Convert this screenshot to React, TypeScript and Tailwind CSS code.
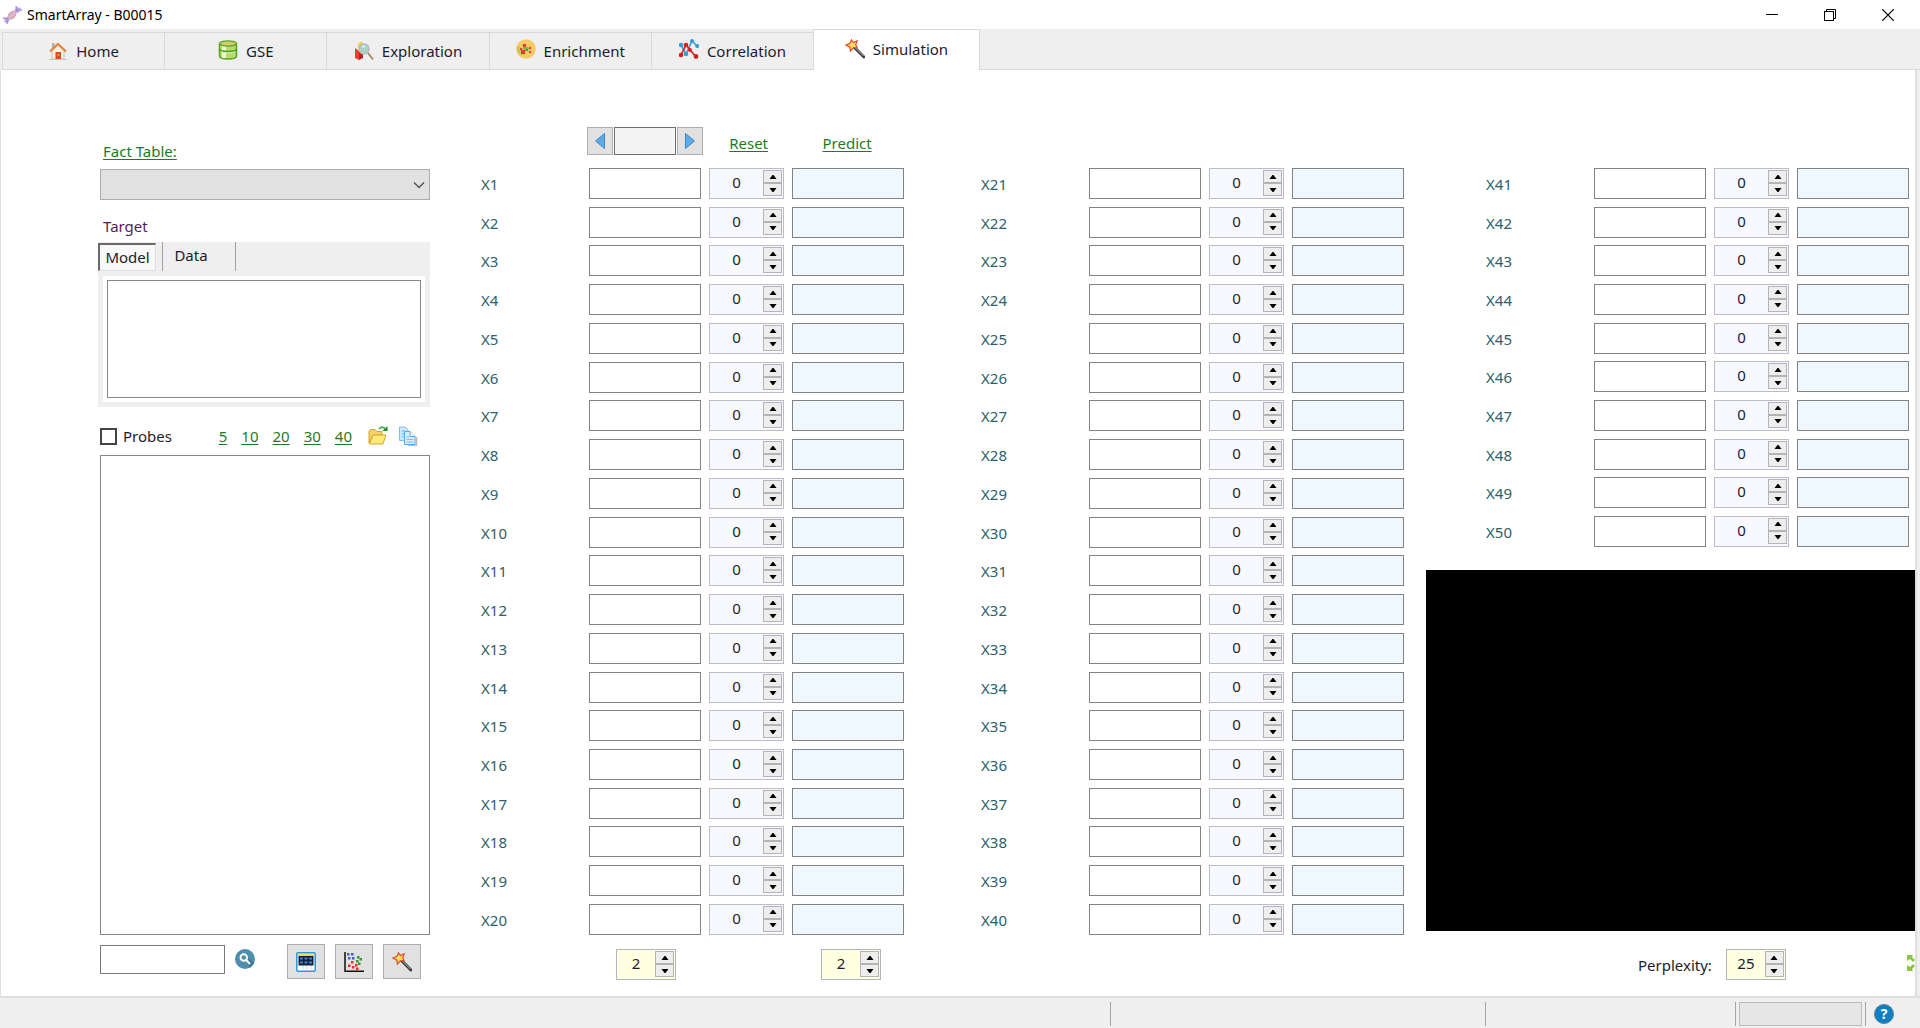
import { useState } from 'react';
import type { ReactNode } from 'react';

interface ITab {
  name: string;
  icon: ReactNode;
}

const DnaIcon = () => (
  <svg className="h-5 w-5" viewBox="0 0 20 20" fill="none">
    <path d="M2 17 L4 12 L8 13 L6 18 Z" fill="#bfa2dc" />
    <path d="M12 7 L14 2 L19 3 L16 8 Z" fill="#bfa2dc" />
    <ellipse cx="10" cy="10" rx="5" ry="3.500" transform="rotate(-42 10 10)" fill="#d3c0e6" />
    <path d="M7 10 L12 13 M9 8 L13 11" stroke="#f0b48e" strokeWidth="1.500" />
    <path d="M1 13 L6 14 L5 19 M14 1 L15 6 L20 5" stroke="#a58fdc" strokeWidth="1.300" />
    <path d="M6 13 C6 9 10 6 14 6 M7 14 C11 14 14 11 14 7" stroke="#d79ac4" strokeWidth="1.200" />
  </svg>
);

const HomeIcon = () => (
  <svg className="h-5 w-5" viewBox="0 0 20 20">
    <path d="M4 9 L10 4 L16 9 V18 H4 Z" fill="#f6efe0" stroke="#c9c2b2" />
    <path d="M4 2 H6.500 V8 H4 Z" fill="#b0b0b0" />
    <path d="M2 10.500 L10 3 L18 10.500" fill="none" stroke="#e0853c" strokeWidth="2.200" />
    <rect x="7.500" y="11" width="5.500" height="7" fill="#dd4a22" />
    <path d="M9.500 13 H11.500 V15 H9.500 Z" fill="#f08a55" />
    <path d="M1 18.500 H19" stroke="#c4c8c0" />
  </svg>
);

const DatabaseIcon = () => (
  <svg className="mb-0.5 h-5 w-5" viewBox="0 0 20 20">
    <path d="M1.500 4 V16 C1.500 20 18.500 20 18.500 16 V4 Z" fill="#b5dc6c" stroke="#5aa61f" strokeWidth="1.500" />
    <path d="M6 6 V18" stroke="#eef9cc" strokeWidth="4" />
    <ellipse cx="10" cy="3.500" rx="8.500" ry="2.600" fill="#d3c873" stroke="#5aa61f" strokeWidth="1.300" />
    <path d="M1.500 9.500 C2 12.500 18 12.500 18.500 9.500" fill="none" stroke="#4f9e1c" strokeWidth="2" />
    <path d="M3 11 C4 13.500 16 13.500 17 11" fill="none" stroke="#f2fbd8" />
  </svg>
);

const ExplorationIcon = () => (
  <svg className="h-5 w-5" viewBox="0 0 20 20">
    <path d="M1 7 L5 10 V19 L1 17 Z" fill="#ee3b30" />
    <path d="M5 10 L9 9 V17 L5 19 Z" fill="#b81f1f" />
    <path d="M4 3 L7 0.500 L10 3 V10 H4 Z" fill="#f8cf3d" />
    <circle cx="10" cy="8" r="5" fill="#a9d3c4" stroke="#b4bcc4" strokeWidth="1.600" />
    <path d="M8 6 L11 5" stroke="#effaf6" strokeWidth="1.500" />
    <path d="M14 12 L19 18.500" stroke="#a98a68" strokeWidth="2" />
  </svg>
);

const EnrichmentIcon = () => (
  <svg className="mb-1 h-5 w-5" viewBox="0 0 20 20">
    <circle cx="10" cy="10" r="9.800" fill="#fdc866" />
    <path d="M0.500 8 C5 7 10 9 9 16 C5 17 1 15 0.500 8" fill="#c5c860" />
    <path d="M7 8 L12 8 L13 11 L8 13 Z" fill="#6cc04a" />
    <rect x="7" y="5" width="3" height="3" fill="#f0372d" />
    <rect x="13" y="8" width="2" height="2" fill="#f0372d" />
    <rect x="4" y="9" width="2" height="2" fill="#f0372d" />
    <rect x="5" y="11" width="4" height="4" fill="#f0372d" />
    <rect x="13" y="12" width="2" height="2" fill="#f0372d" />
    <rect x="10" y="10" width="2" height="2" fill="#3c9e31" />
  </svg>
);

const CorrelationIcon = () => (
  <svg className="mb-1 h-5 w-5" viewBox="0 0 20 20">
    <g stroke="#3c9bd1" fill="#3c9bd1" strokeWidth="1.600">
      <path d="M2 6 L7 15 L13 2 L18 7" fill="none" />
      <circle cx="2" cy="6" r="1.500" />
      <circle cx="7" cy="15" r="1.500" />
      <circle cx="13" cy="2" r="1.200" />
      <circle cx="18.200" cy="7" r="1.200" />
    </g>
    <g stroke="#d4201f" fill="#d4201f" strokeWidth="1.600">
      <path d="M2 16 L7 6 L17 18" fill="none" />
      <circle cx="2" cy="16" r="1.500" />
      <circle cx="7" cy="6" r="1.500" />
      <circle cx="11" cy="11" r="1.200" />
      <circle cx="17" cy="17.500" r="1.600" />
    </g>
  </svg>
);

const WandIcon = () => (
  <svg className="h-5 w-5" viewBox="0 0 20 20">
    <path d="M9 8 L19 18" stroke="#3a3a3a" strokeWidth="3" strokeLinecap="round" />
    <path d="M9.500 8 L18.500 17" stroke="#b5b5b5" />
    <path
      d="M6.500 0.800 L8.300 3.500 L12.200 1.800 L10.700 5.800 L12.200 8.800 L8.500 8.800 L5.300 12 L4.800 8.200 L0.800 6 L4.800 4.500 Z"
      fill="#ffd84a"
      stroke="#d9482b"
      strokeWidth="1.100"
    />
    <path d="M6.500 4 L8 6 L6 7 Z" fill="#fff3b8" />
  </svg>
);

const FolderIcon = () => (
  <svg className="h-5 w-5" viewBox="0 0 20 20">
    <path d="M1 17 V5 L3 3.500 H7 L9 5.500 H14 V9 H5 Z" fill="#f4d468" stroke="#d3a52c" />
    <path d="M1.500 18 L5 9 H18 L15 18 Z" fill="#ffe97a" stroke="#d9a82a" strokeLinejoin="round" />
    <path d="M11 3 C13 0.500 16 1 17 3" fill="none" stroke="#5fae5a" strokeWidth="2" />
    <path d="M19.500 0 V5 H14.500 Z" fill="#1f8a2a" />
  </svg>
);

const CopyIcon = () => (
  <svg className="h-5 w-5" viewBox="0 0 20 20">
    <path d="M10 19.500 H18.500 V11" fill="none" stroke="#b9b9b9" strokeWidth="1.500" />
    <path d="M1.500 1 H7 L10 4 V14.500 H1.500 Z" fill="#cfe8fc" stroke="#7dbcf0" />
    <path d="M3.500 5 H7 M3.500 8 H7 M3.500 11 H7" stroke="#7db9ea" />
    <path d="M6.500 5.500 H12 L17 10.500 V18.500 H6.500 Z" fill="#d9edfd" stroke="#56a9ee" strokeLinejoin="round" />
    <path d="M12 5.500 V10.500 H17" fill="#fff" stroke="#56a9ee" />
    <path d="M8.500 11 H11 M8.500 13.500 H15 M8.500 16 H15" stroke="#7db9ea" />
  </svg>
);

const SearchIcon = () => (
  <svg className="h-5 w-5" viewBox="0 0 20 20">
    <circle cx="10" cy="10" r="10" fill="#4f8fad" />
    <path d="M11 12 L15 19 L19 14 L13 9 Z" fill="#3b7593" />
    <circle cx="8.800" cy="8.500" r="3.300" fill="none" stroke="#fff" strokeWidth="1.900" />
    <path d="M11.200 11 L14.500 14.500" stroke="#fff" strokeWidth="2.200" strokeLinecap="round" />
  </svg>
);

const TableIcon = () => (
  <svg className="h-5 w-5" viewBox="0 0 20 20">
    <rect x="0.800" y="0.800" width="18.400" height="18.400" rx="1" fill="#fff" stroke="#3096d3" strokeWidth="1.500" />
    <path d="M2 3 H18" stroke="#f0c43a" strokeWidth="1.500" />
    <rect x="2.500" y="4" width="15" height="9.500" fill="#10203c" />
    <path d="M4 6.500 H7 M8.500 6.500 H11.500 M13 6.500 H16 M4 10.500 H7 M8.500 10.500 H11.500 M13 10.500 H16" stroke="#4d80bd" strokeWidth="2" />
    <path d="M7 14 V17 M11 14 V17 M15 14 V17" stroke="#bcd4ea" />
  </svg>
);

const ScatterIcon = () => (
  <svg className="h-5 w-5" viewBox="0 0 20 20">
    <path d="M1 0 V19.200 H20" fill="none" stroke="#111" strokeWidth="1.500" />
    <path d="M3 1 h2.500 v2.500 h-2.500z M7 1 h2.500 v2.500 h-2.500z M4 5 h2.500 v2.500 h-2.500z M8 5 h2.500 v2.500 h-2.500z" fill="#3f63c4" />
    <path d="M13 4 h2.500 v2.500 h-2.500z M15.500 6 h2.500 v2.500 h-2.500z M12 8 h2.500 v2.500 h-2.500z M14 10.500 h2.500 v2.500 h-2.500z" fill="#2f9a37" />
    <path d="M7 9 h2.500 v2.500 h-2.500z M4 12.500 h2.500 v2.500 h-2.500z M8 14 h2.500 v2.500 h-2.500z M11 12 h2.500 v2.500 h-2.500z M12 15.500 h2.500 v2.500 h-2.500z" fill="#ee2b2b" />
  </svg>
);

const HelpIcon = () => (
  <span className="flex h-5 w-5 items-center justify-center rounded-full border border-[#5d7f94] bg-[#0f7fc4] text-sm leading-none font-bold text-white">
    ?
  </span>
);

const tabs: ITab[] = [
  { name: 'Home', icon: <HomeIcon /> },
  { name: 'GSE', icon: <DatabaseIcon /> },
  { name: 'Exploration', icon: <ExplorationIcon /> },
  { name: 'Enrichment', icon: <EnrichmentIcon /> },
  { name: 'Correlation', icon: <CorrelationIcon /> },
];

const range = (from: number, to: number) => Array.from({ length: to - from + 1 }, (_, i) => from + i);

interface ISpinner {
  label: string;
  start: number;
  id?: string;
  yellow?: boolean;
}

function Spinner({ label, start, id, yellow }: ISpinner) {
  const [value, setValue] = useState(start);

  return (
    <div
      className={
        yellow
          ? 'flex h-[31px] w-[60px] border border-[#b4b4bc] bg-[#ffffe1]'
          : 'flex h-[31px] w-[75px] border border-[#bcbcc8] bg-[#f8f8ff]'
      }
    >
      <input
        id={id}
        aria-label={label}
        value={value}
        onChange={(e) => setValue(Number(e.target.value) || 0)}
        className="h-[26px] min-w-0 flex-1 bg-transparent text-center outline-none"
      />
      <div className="mt-px mr-px flex h-[26px] w-[19px] flex-col border border-[#b4b4b4] bg-[#b4b4b4]">
        <button
          aria-label={`${label} up`}
          onClick={() => setValue(value + 1)}
          className="flex flex-1 items-center justify-center border-b border-[#b4b4b4] bg-[#eeeeee]"
        >
          <svg className="h-1 w-2" viewBox="0 0 8 4"><path d="M3.500 0 H4.500 L7.500 4 H0.500 Z" fill="#000" /></svg>
        </button>
        <button
          aria-label={`${label} down`}
          onClick={() => setValue(value - 1)}
          className="flex flex-1 items-center justify-center border-t border-[#b4b4b4] bg-[#eeeeee]"
        >
          <svg className="h-1 w-2" viewBox="0 0 8 4"><path d="M0.500 0 H7.500 L4.500 4 H3.500 Z" fill="#000" /></svg>
        </button>
      </div>
    </div>
  );
}

function VariableRow({ n }: { n: number }) {
  return (
    <div className="grid h-[31px] grid-cols-[100fr_112fr_75px_112fr] gap-2">
      <label htmlFor={`x${n}`} className="pt-1.5 leading-5 text-[#2f5f68]">
        X{n}
      </label>
      <input id={`x${n}`} className="w-full min-w-0 border border-[#828282] bg-white px-1" />
      <Spinner label={`X${n} change`} start={0} />
      <input aria-label={`X${n} prediction`} className="w-full min-w-0 border border-[#828282] bg-[#f0f8ff] px-1" />
    </div>
  );
}

const linkStyle = 'leading-5 text-[#1f7a1f] underline underline-offset-2';

function LeftPanel() {
  return (
    <div className="flex w-[332px] shrink-0 flex-col pt-[71px] pb-[17px]">
      <a href="#fact" className={`${linkStyle} ml-[5px] self-start`}>Fact Table:</a>
      <div className="relative mt-2 ml-0.5">
        <select
          aria-label="Fact Table"
          className="block h-[31px] w-full appearance-none border border-[#adadad] bg-[#e1e1e1] px-2"
        />
        <svg className="pointer-events-none absolute top-3 right-[5px] h-2 w-3" viewBox="0 0 12 8" fill="none">
          <path d="M1 1.500 L6 6.500 L11 1.500" stroke="#555" strokeWidth="1.500" />
        </svg>
      </div>
      <div className="mt-4 ml-[5px] leading-5 text-[#5b1a5b]">Target</div>

      <div className="mt-1.5 bg-[#efefef]">
        <div className="flex h-[29px]" role="tablist">
          <button
            role="tab"
            aria-selected="true"
            className="mt-px h-7 w-[58px] border-t-2 border-r border-b border-l-2 border-[#696969] border-r-[#dedede] border-b-[#dedede] bg-[#f8f8f8]"
          >
            Model
          </button>
          <button role="tab" aria-selected="false" className="ml-1.5 h-[29px] w-[74px] border-x border-[#a0a0a0] pr-4 pb-0.5">
            Data
          </button>
        </div>
        <div className="px-[5px] pt-[5px] pb-[5px]">
          <div className="bg-white p-1">
            <textarea
              aria-label="Model"
              className="block h-[118px] w-full resize-none border border-[#828790] bg-white p-1 outline-none"
            />
          </div>
        </div>
      </div>

      <div className="mt-[19px] ml-0.5 flex h-5 items-center">
        <input
          id="probes"
          type="checkbox"
          className="h-[17px] w-[17px] appearance-none border-2 border-[#444444] bg-white checked:bg-[#444444]"
        />
        <label htmlFor="probes" className="ml-1.5 flex-1 leading-5">Probes</label>
        <div className="flex gap-[14px]">
          {[5, 10, 20, 30, 40].map((count) => (
            <a key={count} href={`#top-${count}`} className={linkStyle}>{count}</a>
          ))}
        </div>
        <button aria-label="Open" className="ml-4"><FolderIcon /></button>
        <button aria-label="Copy" className="mr-3 ml-2.5"><CopyIcon /></button>
      </div>
      <textarea
        aria-label="Probe list"
        className="mt-[9px] ml-0.5 block flex-1 resize-none border border-[#828790] bg-white p-1 outline-none"
      />
      <div className="mt-[9px] mr-[9px] ml-0.5 flex h-[35px] items-center">
        <input aria-label="Search" className="mb-1 h-[29px] w-[125px] border border-[#7a7a7a] bg-white px-1" />
        <button aria-label="Find" className="mr-auto mb-1.5 ml-2.5"><SearchIcon /></button>
        <div className="flex gap-2.5">
          <button aria-label="Table" className="flex h-[35px] w-[38px] items-center justify-center border border-[#adadad] bg-[#e1e1e1]">
            <TableIcon />
          </button>
          <button aria-label="Scatter plot" className="flex h-[35px] w-[38px] items-center justify-center border border-[#adadad] bg-[#e1e1e1]">
            <ScatterIcon />
          </button>
          <button aria-label="Simulate" className="flex h-[35px] w-[38px] items-center justify-center border border-[#adadad] bg-[#e1e1e1]">
            <WandIcon />
          </button>
        </div>
      </div>
    </div>
  );
}

export default function App() {
  return (
    <div className="flex min-h-screen flex-col bg-[#efefef] font-['Noto_Sans','Open_Sans',sans-serif] text-[15px] text-[#1c1c2c]">
      <header className="flex h-[29px] items-center bg-white pl-0.5">
        <DnaIcon />
        <h1 className="ml-[5px] text-sm text-black">SmartArray - B00015</h1>
        <div className="ml-auto flex">
          <button aria-label="Minimize" className="flex h-7 w-[58px] items-center justify-center">
            <svg className="h-3 w-3" viewBox="0 0 12 12"><path d="M0 5.500 H12" stroke="#000" /></svg>
          </button>
          <button aria-label="Restore" className="flex h-7 w-[58px] items-center justify-center">
            <svg className="h-3 w-3" viewBox="0 0 12 12" fill="none" stroke="#000">
              <rect x="0.500" y="2.500" width="9" height="9" />
              <path d="M2.500 2.500 V0.500 H11.500 V9.500 H9.500" />
            </svg>
          </button>
          <button aria-label="Close" className="mr-[3px] flex h-7 w-[58px] items-center justify-center">
            <svg className="h-3 w-3" viewBox="0 0 12 12"><path d="M0 0 L12 12 M12 0 L0 12" stroke="#000" strokeWidth="1.200" /></svg>
          </button>
        </div>
      </header>

      <nav className="flex h-[41px] items-end pl-0.5" role="tablist">
        <div className="flex w-[811px]">
          {tabs.map((tab) => (
            <button
              key={tab.name}
              role="tab"
              aria-selected="false"
              className="flex h-[38px] flex-1 items-center justify-center gap-2 border-t border-b border-l border-[#d9d9d9]"
            >
              {tab.icon}
              {tab.name}
            </button>
          ))}
        </div>
        <button
          role="tab"
          aria-selected="true"
          className="flex h-[41px] w-[167px] items-center justify-center gap-2 border-t border-r border-l border-[#d9d9d9] bg-white pb-0.5"
        >
          <WandIcon />
          Simulation
        </button>
        <div className="h-px flex-1 bg-[#d9d9d9]" />
      </nav>

      <main className="mr-[3px] flex flex-1 border-r-2 border-l border-[#dfdfdf] bg-white pl-[97px]">
        <LeftPanel />

        <section className="ml-[51px] flex flex-1 flex-col pt-[57px] pb-4">
          <div className="mb-3 grid h-[29px] grid-cols-[100fr_112fr_75px_112fr] gap-2">
            <div className="col-start-2 flex h-7 justify-center gap-px">
              <button aria-label="Previous" className="flex w-[26px] shrink-0 items-center justify-center border border-[#adadad] bg-[#e1e1e1]">
                <svg className="h-4 w-[10px]" viewBox="0 0 10 16"><path d="M9.500 0.500 V15.500 L0.500 8 Z" fill="#5fabe4" stroke="#3d86c8" /></svg>
              </button>
              <input aria-label="Record" className="w-[62px] shrink-0 border border-[#6e6e6e] bg-[#f4f4f4] px-1" />
              <button aria-label="Next" className="flex w-[26px] shrink-0 items-center justify-center border border-[#adadad] bg-[#e1e1e1]">
                <svg className="h-4 w-[10px]" viewBox="0 0 10 16"><path d="M0.500 0.500 V15.500 L9.500 8 Z" fill="#5fabe4" stroke="#3d86c8" /></svg>
              </button>
            </div>
            <a href="#reset" className={`${linkStyle} mt-1.5 text-center`}>Reset</a>
            <a href="#predict" className={`${linkStyle} mt-1.5 pr-1 text-center`}>Predict</a>
          </div>
          <div className="flex flex-1 flex-col justify-between">
            {range(1, 20).map((n) => <VariableRow key={n} n={n} />)}
          </div>
          <div className="mt-[14px] grid grid-cols-[100fr_112fr_75px_112fr] gap-2">
            <div className="col-start-2 flex justify-center pl-0.5"><Spinner label="Value decimals" start={2} yellow /></div>
            <div className="col-start-4 flex justify-center pl-1.5"><Spinner label="Prediction decimals" start={2} yellow /></div>
          </div>
        </section>

        <section className="ml-[77px] flex flex-1 flex-col justify-between pt-[98px] pb-[61px]">
          {range(21, 40).map((n) => <VariableRow key={n} n={n} />)}
        </section>

        <section className="ml-[22px] flex w-[489px] shrink-0 flex-col pt-[98px] pb-4">
          <div className="mr-1.5 ml-[60px] flex h-[379px] flex-col justify-between">
            {range(41, 50).map((n) => <VariableRow key={n} n={n} />)}
          </div>
          <div className="mt-[23px] flex-1 bg-black" />
          <div className="mt-[18px] flex items-center">
            <label htmlFor="perplexity" className="ml-[212px] leading-5">Perplexity:</label>
            <div className="ml-3.5">
              <Spinner id="perplexity" label="Perplexity" start={25} yellow />
            </div>
            <button aria-label="Expand" className="mb-1 ml-auto">
              <svg className="h-4 w-2" viewBox="0 0 8 16" fill="#8cc540">
                <path d="M0 0 H6 L5 2 L8 5 L6 7 L3 4 L0 6 Z M0 16 H6 L5 14 L8 11 L6 9 L3 12 L0 10 Z" />
              </svg>
            </button>
          </div>
        </section>
      </main>

      <footer className="flex h-8 border-t-2 border-[#dfdfdf] pt-1 pb-0.5">
        <div className="flex-1 border-r border-[#a5a5a5]" />
        <div className="w-[375px] border-r border-[#a5a5a5]" />
        <div className="w-[250px] border-r border-[#a5a5a5]" />
        <div className="w-[130px] border-r border-[#a5a5a5] px-[3px]">
          <div className="h-full border border-[#bcbcbc] bg-[#e6e6e6]" />
        </div>
        <button aria-label="Help" className="mr-[26px] ml-2 flex items-center"><HelpIcon /></button>
      </footer>
    </div>
  );
}
